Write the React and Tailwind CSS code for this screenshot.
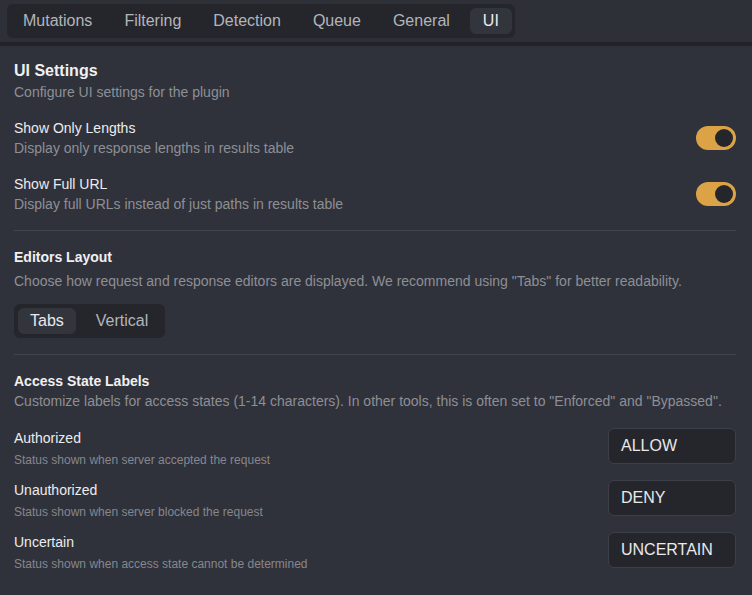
import React from "react";

const font = { fontFamily: '"Liberation Sans", Arial, sans-serif' };

function Toggle() {
  return (
    <div className="flex h-6 w-10 shrink-0 items-center justify-end rounded-full bg-[#dba346] px-[3px]">
      <div className="h-[18px] w-[18px] rounded-full bg-[#25262c]" />
    </div>
  );
}

function ToggleRow({ title, desc }) {
  return (
    <div className="flex items-center justify-between">
      <div className="flex flex-col">
        <div className="text-sm leading-5 text-[#ececee]">{title}</div>
        <div className="text-sm leading-5 text-[#8d8f95]">{desc}</div>
      </div>
      <Toggle />
    </div>
  );
}

function LabelRow({ title, desc, value }) {
  return (
    <div className="flex items-start justify-between">
      <div className="flex flex-col">
        <div className="text-sm leading-5 text-[#ececee]">{title}</div>
        <div className="mt-1 text-xs leading-4 text-[#85878d]">{desc}</div>
      </div>
      <div className="flex h-9 w-32 items-center rounded-md border border-[#3d3f48] bg-[#25262b] pl-[12px] text-base text-[#e9e9ec]">
        {value}
      </div>
    </div>
  );
}

export default function App() {
  const tabs = ["Mutations", "Filtering", "Detection", "Queue", "General", "UI"];
  return (
    <div style={font} className="h-[595px] w-[752px] overflow-hidden bg-[#30323b]">
      <div className="border-b-[4px] border-[#222328] bg-[#2e3038] pl-[7px] pt-1 pb-[4px]">
        <div className="inline-flex gap-2 rounded-md bg-[#25262b] py-1 pl-1 pr-[3px]">
          {tabs.map((t) => (
            <div
              key={t}
              className={
                "flex h-[26px] items-center rounded-md px-3 text-base " +
                (t === "UI" ? "bg-[#33353d] px-[13px] text-[#e8e9ec]" : "text-[#b3b5bb]")
              }
            >
              {t}
            </div>
          ))}
        </div>
      </div>

      <div className="pl-[14px] pr-4 pt-[14px]">
        <div className="text-base font-bold leading-[22px] text-[#f0f0f2]">UI Settings</div>
        <div className="text-sm leading-5 text-[#8d8f95]">Configure UI settings for the plugin</div>

        <div className="mt-4 flex flex-col gap-4">
          <ToggleRow title="Show Only Lengths" desc="Display only response lengths in results table" />
          <ToggleRow title="Show Full URL" desc="Display full URLs instead of just paths in results table" />
        </div>

        <div className="mt-4 h-px bg-[#43454e]" />

        <div className="mt-4 text-sm font-bold leading-5 text-[#f0f0f2]">Editors Layout</div>
        <div className="mt-1 text-sm leading-5 text-[#8d8f95]">
          Choose how request and response editors are displayed. We recommend using "Tabs" for better readability.
        </div>
        <div className="mt-[13px] inline-flex gap-2 rounded-md bg-[#25262b] py-1 pl-1 pr-[5px]">
          <div className="flex h-[26px] items-center rounded-md bg-[#33353d] px-3 text-base text-[#e8e9ec]">Tabs</div>
          <div className="flex h-[26px] items-center rounded-md px-3 text-base text-[#b3b5bb]">Vertical</div>
        </div>

        <div className="mt-4 h-px bg-[#43454e]" />

        <div className="mt-4 text-sm font-bold leading-5 text-[#f0f0f2]">Access State Labels</div>
        <div className="text-sm leading-5 text-[#8d8f95]">
          Customize labels for access states (1-14 characters). In other tools, this is often set to "Enforced" and "Bypassed".
        </div>

        <div className="mt-[17px] flex flex-col gap-3">
          <LabelRow title="Authorized" desc="Status shown when server accepted the request" value="ALLOW" />
          <LabelRow title="Unauthorized" desc="Status shown when server blocked the request" value="DENY" />
          <LabelRow title="Uncertain" desc="Status shown when access state cannot be determined" value="UNCERTAIN" />
        </div>
      </div>
    </div>
  );
}
